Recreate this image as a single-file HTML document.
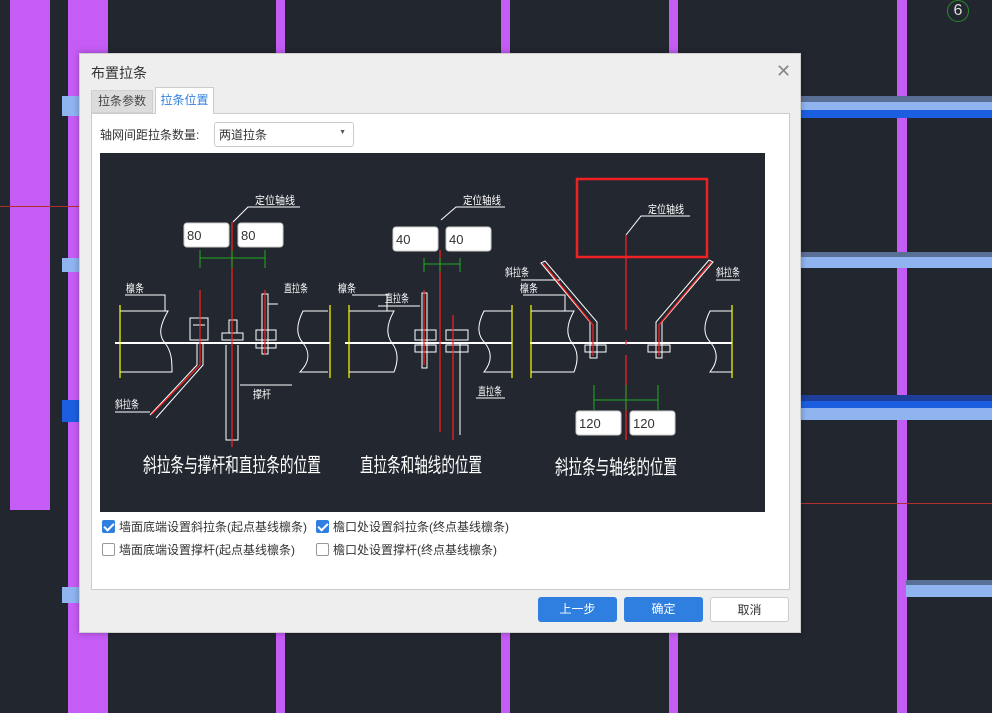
<!DOCTYPE html>
<html><head><meta charset="utf-8">
<style>
*{margin:0;padding:0;box-sizing:border-box}
body{width:992px;height:713px;overflow:hidden;background:#22262f;position:relative;font-family:"Liberation Sans","Noto Sans CJK SC",sans-serif;font-size:12px;color:#333}
.a{position:absolute}
.p{background:#c45cf5}
.bl{background:#8fb4ef}
.bd{background:#1b5fe0}
.cb{position:absolute;width:13px;height:13px;border:1px solid #999;border-radius:2px;background:#fff}
.cb.on{background:#2f7fe0;border-color:#2f7fe0}
.cb.on::after{content:"";position:absolute;left:3px;top:0px;width:4px;height:8px;border:solid #fff;border-width:0 2px 2px 0;transform:rotate(45deg)}
.btn{position:absolute;top:597px;height:25px;width:79px;border-radius:3px;text-align:center;line-height:25px;font-size:12px}
</style></head><body>
<!-- background CAD -->
<div class="a p" style="left:10px;top:0;width:40px;height:510px"></div>
<div class="a p" style="left:68px;top:0;width:40px;height:713px"></div>
<div class="a p" style="left:276px;top:0;width:9px;height:713px"></div>
<div class="a p" style="left:501px;top:0;width:9px;height:713px"></div>
<div class="a p" style="left:669px;top:0;width:9px;height:713px"></div>
<div class="a p" style="left:897px;top:0;width:10px;height:713px"></div>
<div class="a" style="left:800px;top:96px;width:192px;height:6px;background:#5a6f96"></div>
<div class="a bl" style="left:800px;top:102px;width:192px;height:8px"></div>
<div class="a bd" style="left:800px;top:110px;width:192px;height:8px"></div>
<div class="a" style="left:800px;top:252px;width:192px;height:5px;background:#5a6f96"></div>
<div class="a bl" style="left:800px;top:257px;width:192px;height:11px"></div>
<div class="a" style="left:800px;top:395px;width:192px;height:6px;background:#1d3f9a"></div>
<div class="a bd" style="left:800px;top:401px;width:192px;height:7px"></div>
<div class="a bl" style="left:800px;top:408px;width:192px;height:12px"></div>
<div class="a" style="left:906px;top:580px;width:86px;height:5px;background:#5a6f96"></div>
<div class="a bl" style="left:906px;top:585px;width:86px;height:12px"></div>
<div class="a bl" style="left:62px;top:96px;width:20px;height:20px"></div>
<div class="a bl" style="left:62px;top:258px;width:20px;height:14px"></div>
<div class="a bd" style="left:62px;top:400px;width:20px;height:22px"></div>
<div class="a bl" style="left:62px;top:587px;width:20px;height:16px"></div>
<div class="a" style="left:0;top:206px;width:80px;height:1px;background:#b03030"></div>
<div class="a" style="left:800px;top:503px;width:192px;height:1px;background:#b03030"></div>
<div class="a" style="left:947px;top:0;width:22px;height:22px;border:1px solid #2a8a2a;border-radius:50%;color:#ddd;font-size:16px;text-align:center;line-height:20px">6</div>
<!-- dialog -->
<div class="a" style="left:79px;top:53px;width:722px;height:580px;background:#eeeeee;border:1px solid #cfcfcf;box-shadow:0 0 6px rgba(0,0,0,.3)"></div>
<div class="a" style="left:91px;top:63px;font-size:14px;color:#333">布置拉条</div>
<div class="a" style="left:776px;top:61px;font-size:18px;color:#888;font-weight:300">✕</div>
<div class="a" style="left:91px;top:90px;width:62px;height:23px;background:#dcdcdc;border:1px solid #d0d0d0;text-align:center;line-height:21px;color:#444">拉条参数</div>
<div class="a" style="left:155px;top:87px;width:59px;height:27px;background:#fff;border:1px solid #ccc;border-bottom:none;text-align:center;line-height:25px;color:#2f7fe0;z-index:2">拉条位置</div>
<div class="a" style="left:91px;top:113px;width:699px;height:477px;background:#fff;border:1px solid #ccc"></div>
<div class="a" style="left:100px;top:126px;color:#333">轴网间距拉条数量:</div>
<div class="a" style="left:214px;top:122px;width:140px;height:25px;border:1px solid #ccc;border-radius:3px;background:#fff;padding:3px 0 0 4px">两道拉条<span style="position:absolute;right:7px;top:6px;font-size:7px;color:#555">▼</span></div>
<svg class="a" style="left:100px;top:153px" width="665" height="359" viewBox="100 153 665 359">
<rect x="100" y="153" width="665" height="359" fill="#232830"/>
<g fill="none" stroke="#fff" stroke-width="1">
<!-- diagram 1 -->
<path d="M120 311H168C160 325 158 335 165 343C172 352 172 362 172 372H120"/>
<path d="M328 311H303C296 325 296 335 303 343C310 352 310 362 300 372H328"/>
<path d="M125 295H165V311M115 412H150M278 304H268M268 294V354H262V294ZM292 385H240"/>
<path d="M197 343V365L150 415"/><path d="M203 343V365L156 418"/>
<path d="M190 318H208V340H190ZM193 325H205"/>
<path d="M222 340H243V333H222ZM229 333V320H237V333M226 345V440H238V345"/>
<path d="M256 340H276V330H256ZM256 348H276V343H256Z"/>
<path d="M115 343H330" stroke-width="2"/>
<path d="M233 222L248 207H300M190 240"/>
<!-- diagram 2 -->
<path d="M349 311H394C386 325 386 335 392 343C399 352 398 362 394 372H349"/>
<path d="M512 311H484C477 325 477 335 485 343C492 352 492 362 484 372H512"/>
<path d="M352 295H387V311M378 306H420M422 293V368H427V293ZM476 398H505M460 343V435"/>
<path d="M415 340H436V330H415ZM415 352H436V345H415Z"/>
<path d="M446 340H468V330H446ZM446 352H468V345H446Z"/>
<path d="M345 343H512" stroke-width="2"/>
<path d="M441 220L456 207H505"/>
<!-- diagram 3 -->
<path d="M531 311H574C566 325 566 335 572 343C579 352 578 362 574 372H531"/>
<path d="M732 311H710C703 325 703 335 711 343C718 352 718 362 710 372H732"/>
<path d="M521 280H560M523 295H565V311M716 280H740"/>
<path d="M541 263L590 322V358H597V322L545 261Z"/>
<path d="M713 262L662 322V358H656V322L709 260Z"/>
<path d="M585 352H606V345H585ZM648 352H670V345H648Z"/>
<path d="M530 343H732" stroke-width="2"/>
<path d="M626 235L641 216H690"/>
</g>
<g stroke="#ffff00" stroke-width="1.2">
<path d="M120 305V378M330 305V378M349 305V378M512 305V378M531 305V378M732 305V378"/>
</g>
<g stroke="#ff2020" stroke-width="1.2" fill="none">
<path d="M232 222V447M200 290V365M265 290V355M200 365L152 414M440 250V432M424 290V365M453 315V440"/>
<path d="M626 235V330M626 340V345M626 355V440M543 263L593 325V356M711 262L659 325V356"/>
</g>
<rect x="577" y="179" width="130" height="78" fill="none" stroke="#ee2222" stroke-width="2.5"/>
<g stroke="#22aa22" stroke-width="1" fill="none">
<path d="M200 258H265M200 250V268M232 250V268M265 250V268M424 264H460M424 258V272M440 258V272M460 258V272M594 400H658M594 385V410M626 385V410M658 385V410"/>
</g>
<g fill="#fff" stroke="#ccc">
<rect x="184" y="223" width="45" height="24" rx="3"/><rect x="238" y="223" width="45" height="24" rx="3"/>
<rect x="393" y="227" width="45" height="24" rx="3"/><rect x="446" y="227" width="45" height="24" rx="3"/>
<rect x="576" y="411" width="45" height="24" rx="3"/><rect x="630" y="411" width="45" height="24" rx="3"/>
</g>
<g font-family="Liberation Sans,sans-serif" font-size="13" fill="#333">
<text x="187" y="240">80</text><text x="241" y="240">80</text>
<text x="396" y="244">40</text><text x="449" y="244">40</text>
<text x="579" y="428">120</text><text x="633" y="428">120</text>
</g>
<g font-family="Noto Sans CJK SC,sans-serif" fill="#fff" font-size="11">
<text x="255" y="204" textLength="40" lengthAdjust="spacingAndGlyphs">定位轴线</text>
<text x="463" y="204" textLength="38" lengthAdjust="spacingAndGlyphs">定位轴线</text>
<text x="648" y="213" textLength="36" lengthAdjust="spacingAndGlyphs">定位轴线</text>
<text x="126" y="292" textLength="18" lengthAdjust="spacingAndGlyphs">檩条</text>
<text x="284" y="292" textLength="24" lengthAdjust="spacingAndGlyphs">直拉条</text>
<text x="115" y="408" textLength="24" lengthAdjust="spacingAndGlyphs">斜拉条</text>
<text x="253" y="398" textLength="18" lengthAdjust="spacingAndGlyphs">撑杆</text>
<text x="338" y="292" textLength="18" lengthAdjust="spacingAndGlyphs">檩条</text>
<text x="385" y="302" textLength="24" lengthAdjust="spacingAndGlyphs">直拉条</text>
<text x="478" y="395" textLength="24" lengthAdjust="spacingAndGlyphs">直拉条</text>
<text x="505" y="276" textLength="24" lengthAdjust="spacingAndGlyphs">斜拉条</text>
<text x="520" y="292" textLength="18" lengthAdjust="spacingAndGlyphs">檩条</text>
<text x="716" y="276" textLength="24" lengthAdjust="spacingAndGlyphs">斜拉条</text>
</g>
<g font-family="Noto Sans CJK SC,sans-serif" fill="#fff" font-size="20">
<text x="143" y="472" textLength="178" lengthAdjust="spacingAndGlyphs">斜拉条与撑杆和直拉条的位置</text>
<text x="360" y="472" textLength="122" lengthAdjust="spacingAndGlyphs">直拉条和轴线的位置</text>
<text x="555" y="474" textLength="122" lengthAdjust="spacingAndGlyphs">斜拉条与轴线的位置</text>
</g>
</svg>
<div class="cb on" style="left:102px;top:520px"></div><div class="a" style="left:119px;top:518px">墙面底端设置斜拉条(起点基线檩条)</div>
<div class="cb on" style="left:316px;top:520px"></div><div class="a" style="left:333px;top:518px">檐口处设置斜拉条(终点基线檩条)</div>
<div class="cb" style="left:102px;top:543px"></div><div class="a" style="left:119px;top:541px">墙面底端设置撑杆(起点基线檩条)</div>
<div class="cb" style="left:316px;top:543px"></div><div class="a" style="left:333px;top:541px">檐口处设置撑杆(终点基线檩条)</div>
<div class="btn" style="left:538px;background:#2f7fe0;color:#fff">上一步</div>
<div class="btn" style="left:624px;background:#2f7fe0;color:#fff">确定</div>
<div class="btn" style="left:710px;background:#fff;border:1px solid #ccc;color:#333">取消</div>
</body></html>
